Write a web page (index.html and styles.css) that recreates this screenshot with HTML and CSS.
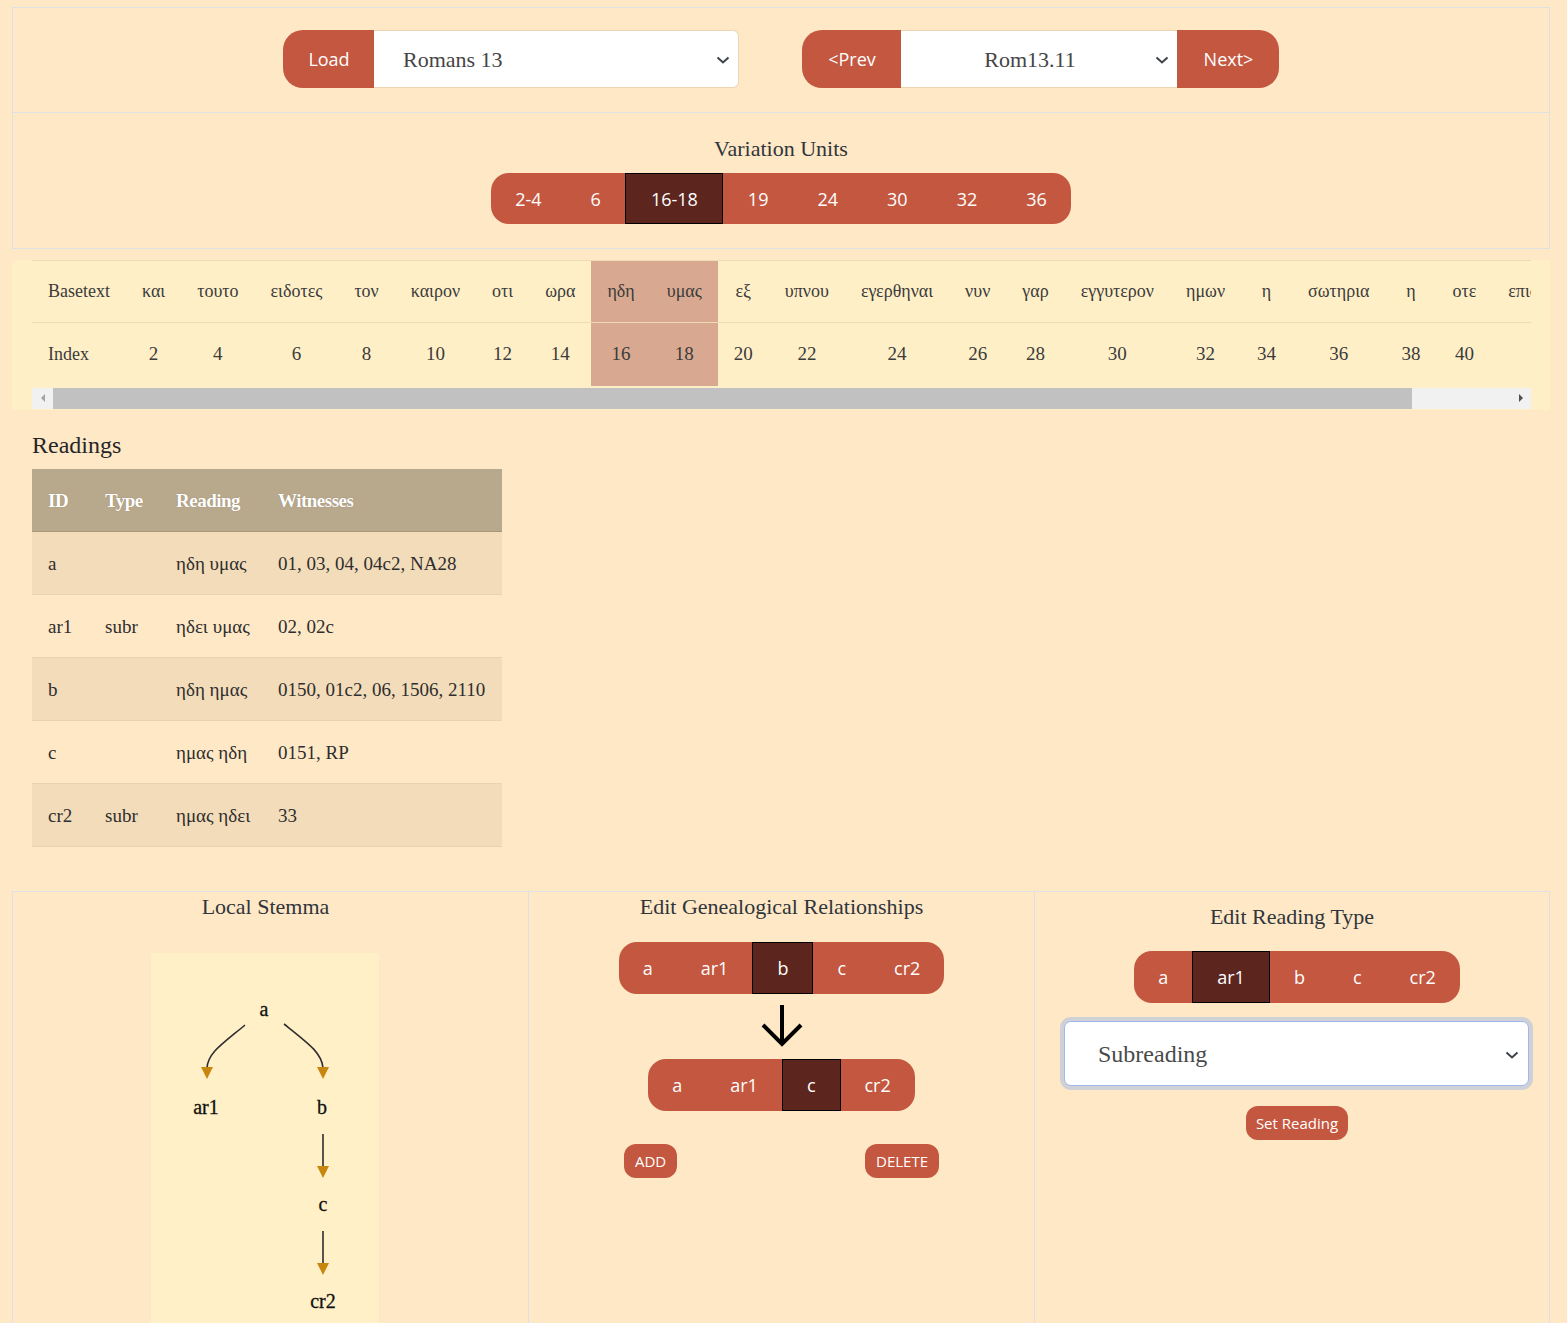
FILE: index.html
```html
<!DOCTYPE html>
<html lang="en">
<head>
<meta charset="utf-8">
<title>Local Stemma Editor</title>
<link rel="stylesheet" href="styles.css">
</head>
<body>
<div class="page">
  <section class="box nav">
    <div class="group">
      <button class="btn load">Load</button>
      <div class="select book"><span>Romans 13</span><svg class="chev" width="14" height="8" viewBox="0 0 14 8"><path d="M1.5 1.5 L7 6.5 L12.5 1.5" fill="none" stroke="#3d4148" stroke-width="2"/></svg></div>
    </div>
    <div class="group">
      <button class="btn prev">&lt;Prev</button>
      <div class="select verse"><span>Rom13.11</span><svg class="chev" width="14" height="8" viewBox="0 0 14 8"><path d="M1.5 1.5 L7 6.5 L12.5 1.5" fill="none" stroke="#3d4148" stroke-width="2"/></svg></div>
      <button class="btn next">Next&gt;</button>
    </div>
  </section>

  <section class="box units">
    <h2 class="title">Variation Units</h2>
    <div class="seg units-seg">
      <button>2-4</button><button>6</button><button class="active">16-18</button><button>19</button><button>24</button><button>30</button><button>32</button><button>36</button>
    </div>
  </section>

  <div class="basetext">
    <div class="scroll">
      <table class="bt">
        <tr class="words">
          <td class="label">Basetext</td><td>και</td><td>τουτο</td><td>ειδοτες</td><td>τον</td><td>καιρον</td><td>οτι</td><td>ωρα</td><td class="hl">ηδη</td><td class="hl">υμας</td><td>εξ</td><td>υπνου</td><td>εγερθηναι</td><td>νυν</td><td>γαρ</td><td>εγγυτερον</td><td>ημων</td><td>η</td><td>σωτηρια</td><td>η</td><td>οτε</td><td>επιστευσαμεν</td>
        </tr>
        <tr class="nums">
          <td class="label">Index</td><td>2</td><td>4</td><td>6</td><td>8</td><td>10</td><td>12</td><td>14</td><td class="hl">16</td><td class="hl">18</td><td>20</td><td>22</td><td>24</td><td>26</td><td>28</td><td>30</td><td>32</td><td>34</td><td>36</td><td>38</td><td>40</td><td>42</td>
        </tr>
      </table>
    </div>
    <div class="hscroll">
      <div class="sb-btn"><svg width="8" height="10" viewBox="0 0 8 10"><path d="M6 1 L2 5 L6 9 Z" fill="#a3a3a3"/></svg></div>
      <div class="sb-thumb"></div>
      <div class="sb-track"></div>
      <div class="sb-btn"><svg width="8" height="10" viewBox="0 0 8 10"><path d="M2 1 L6 5 L2 9 Z" fill="#505050"/></svg></div>
    </div>
  </div>

  <section class="readings">
    <h2 class="rtitle">Readings</h2>
    <table class="rt">
      <thead>
        <tr><th class="c-id">ID</th><th class="c-type">Type</th><th class="c-read">Reading</th><th class="c-wit">Witnesses</th></tr>
      </thead>
      <tbody>
        <tr class="odd"><td>a</td><td></td><td>ηδη υμας</td><td>01, 03, 04, 04c2, NA28</td></tr>
        <tr><td>ar1</td><td>subr</td><td>ηδει υμας</td><td>02, 02c</td></tr>
        <tr class="odd"><td>b</td><td></td><td>ηδη ημας</td><td>0150, 01c2, 06, 1506, 2110</td></tr>
        <tr><td>c</td><td></td><td>ημας ηδη</td><td>0151, RP</td></tr>
        <tr class="odd"><td>cr2</td><td>subr</td><td>ημας ηδει</td><td>33</td></tr>
      </tbody>
    </table>
  </section>

  <div class="panels">
    <section class="panel stemma">
      <h2 class="title">Local Stemma</h2>
      <div class="graph">
        <svg width="228" height="380" viewBox="0 0 228 380">
          <g fill="none" stroke="#2e2e2e" stroke-width="1.6">
            <path d="M94 72 C 70 92, 57 100, 56 115"/>
            <path d="M133 71 C 157 90, 171 100, 172 115"/>
            <path d="M172 181 V214"/>
            <path d="M172 278 V311"/>
          </g>
          <g fill="#c8860f">
            <polygon points="50,114 62,114 56,126"/>
            <polygon points="166,114 178,114 172,126"/>
            <polygon points="166,213 178,213 172,225"/>
            <polygon points="166,310 178,310 172,322"/>
          </g>
          <g class="node">
            <text x="113" y="63">a</text>
            <text x="55" y="161">ar1</text>
            <text x="171" y="161">b</text>
            <text x="172" y="258">c</text>
            <text x="172" y="355">cr2</text>
          </g>
        </svg>
      </div>
    </section>

    <section class="panel gen">
      <h2 class="title">Edit Genealogical Relationships</h2>
      <div class="seg small-seg">
        <button>a</button><button>ar1</button><button class="active">b</button><button>c</button><button>cr2</button>
      </div>
      <svg class="down" width="44" height="44" viewBox="0 0 44 44"><path d="M22 1 V40 M3 21 L22 40 L41 21" fill="none" stroke="#000" stroke-width="4"/></svg>
      <div class="seg small-seg">
        <button>a</button><button>ar1</button><button class="active">c</button><button>cr2</button>
      </div>
      <div class="actions">
        <button class="pill">ADD</button>
        <button class="pill">DELETE</button>
      </div>
    </section>

    <section class="panel rtype">
      <h2 class="title">Edit Reading Type</h2>
      <div class="seg small-seg">
        <button>a</button><button class="active">ar1</button><button>b</button><button>c</button><button>cr2</button>
      </div>
      <div class="select focus"><span>Subreading</span><svg class="chev" width="14" height="8" viewBox="0 0 14 8"><path d="M1.5 1.5 L7 6.5 L12.5 1.5" fill="none" stroke="#3d4148" stroke-width="2"/></svg></div>
      <button class="pill set">Set Reading</button>
    </section>
  </div>
</div>
</body>
</html>
```

FILE: styles.css
```css
* { box-sizing: border-box; }

body {
  margin: 0;
  background: #ffe8c6;
  color: #343a40;
  font-family: "Liberation Serif", "Times New Roman", serif;
}

.page {
  padding: 7px 17px 0 12px;
  height: 1323px;
  overflow: hidden;
}

button {
  font-family: "Open Sans", "Noto Sans", sans-serif;
  color: #fff;
  border: none;
  cursor: pointer;
}

.box {
  border: 1px solid #dfe0e2;
}

/* top navigation */
.nav {
  height: 106px;
  padding: 22px 0 0;
  display: flex;
  justify-content: center;
  gap: 63px;
}

.group {
  display: flex;
  height: 58px;
}

.btn {
  background: #c4573f;
  font-size: 18px;
  height: 58px;
  padding: 0 0 0 1px;
}

.load { width: 91px; border-radius: 20px 0 0 20px; }
.prev { width: 99px; border-radius: 20px 0 0 20px; }
.next { width: 102px; border-radius: 0 20px 20px 0; }

.select {
  background: #fff;
  display: flex;
  align-items: center;
  justify-content: space-between;
  font-size: 22px;
  color: #454545;
}

.book {
  width: 365px;
  border: 1px solid #ecd5b0;
  border-left: none;
  border-radius: 0 6px 6px 0;
  padding: 2px 8px 0 29px;
}

.verse {
  width: 276px;
  border-top: 1px solid #ecd5b0;
  border-bottom: 1px solid #ecd5b0;
  padding: 2px 8px 0 0;
}

.verse span {
  flex: 1;
  text-align: center;
  padding-left: 4px;
}

/* variation units */
.units {
  border-top: none;
  height: 136px;
  padding-top: 21px;
  text-align: center;
}

.title {
  margin: 0;
  font-size: 22px;
  font-weight: normal;
  line-height: 30px;
  color: #2f353b;
}

.seg {
  display: inline-flex;
  background: #c4573f;
  border-radius: 18px;
  overflow: hidden;
}

.seg button {
  background: transparent;
  font-size: 18px;
  height: 51px;
  padding: 0 24.5px;
}

.seg button.active {
  background: #5c261f;
  border: 1px solid #000;
}

.units-seg { margin-top: 9px; }

/* base text table */
.basetext {
  margin-top: 11px;
  background: #ffefc7;
  padding: 0 19px 1px 20px;
}

.scroll {
  overflow: hidden;
}

.bt {
  border-collapse: collapse;
  white-space: nowrap;
  border-top: 1px solid #ecdcb6;
}

.bt td {
  padding: 0 16px;
  text-align: center;
  height: 63px;
  color: #3b3b3b;
}

.bt .words td {
  font-size: 18px;
  border-bottom: 1px solid #ecdcb6;
  height: 62px;
}

.bt .nums td { font-size: 19px; }

.bt td.label {
  text-align: left;
  font-size: 18px;
}

.bt td.hl { background: #d8a990; }

.hscroll {
  margin-top: 2px;
  height: 21px;
  display: flex;
  background: #f1f1f1;
}

.sb-btn {
  width: 21px;
  display: flex;
  align-items: center;
  justify-content: center;
}

.sb-thumb {
  width: 1359px;
  background: #c1c1c1;
}

.sb-track { flex: 1; }

/* readings */
.readings {
  padding-left: 20px;
}

.rtitle {
  margin: 20px 0 9px;
  font-size: 24px;
  font-weight: normal;
  line-height: 30px;
  color: #262626;
}

.rt {
  border-collapse: collapse;
  width: 470px;
  font-size: 19px;
}

.rt th, .rt td {
  text-align: left;
  padding: 2px 0 0 16px;
  height: 63px;
}

.rt th {
  background: #b8a88c;
  color: #fff;
  font-weight: bold;
  text-shadow: 0 0 1px #8a7a60;
  border-bottom: 1px solid #a89878;
  letter-spacing: -0.5px;
}

.rt td {
  color: #2e2e2e;
  border-bottom: 1px solid #ead3ae;
}

.rt tr.odd td { background: #f3dcba; }

.c-id { width: 57px; }
.c-type { width: 71px; }
.c-read { width: 102px; }

/* bottom panels */
.panels {
  margin-top: 44px;
  display: grid;
  grid-template-columns: 516px 506px 1fr;
}

.panel {
  border-top: 1px solid #dfe0e2;
  border-left: 1px solid #dfe0e2;
  height: 440px;
  text-align: center;
}

.panel.rtype { border-right: 1px solid #dfe0e2; }

.stemma .title { margin-top: 0; padding-right: 10px; }

.graph {
  margin: 31px 0 0 138px;
  width: 228px;
  height: 400px;
  background: #fff0c8;
}

.graph svg { display: block; }

.node text {
  font-family: "Liberation Serif", serif;
  font-size: 20px;
  fill: #111;
  text-anchor: middle;
  stroke: #111;
  stroke-width: 0.3px;
}

.gen .small-seg:first-of-type { margin-top: 20px; }

.small-seg button { padding: 0 24px; height: 52px; }

.down {
  display: block;
  margin: 10px auto 11px;
}

.actions {
  display: flex;
  justify-content: space-between;
  padding: 0 95px;
  margin-top: 33px;
}

.pill {
  background: #c4573f;
  font-size: 15px;
  height: 34px;
  border-radius: 12px;
  padding: 0 11px;
}

.rtype .title { margin-top: 10px; }

.rtype .small-seg { margin: 19px 0 0 10px; }

.select.focus {
  margin: 18px 20px 0 29px;
  height: 65px;
  border: 1px solid #9fb9ee;
  border-radius: 7px;
  box-shadow: 0 0 0 4px #cfd1d6;
  padding: 2px 9px 0 33px;
  font-size: 24px;
  color: #4a4a4a;
}

.pill.set {
  margin: 20px 0 0 10px;
  width: 102px;
  padding: 0;
}
```
